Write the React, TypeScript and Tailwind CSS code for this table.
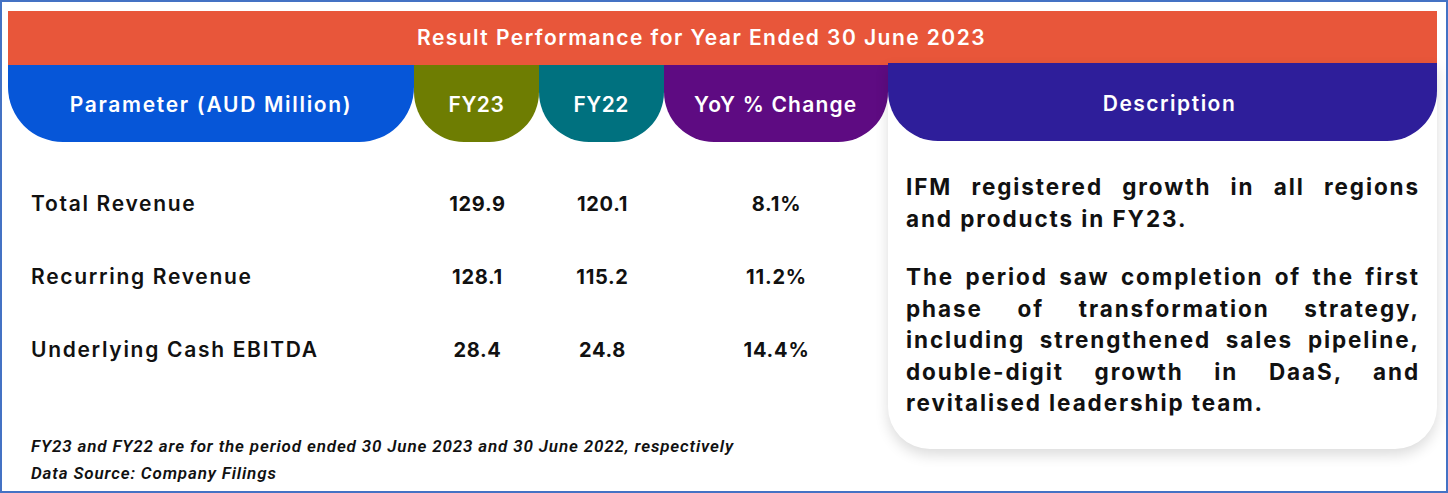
import React from "react";

const rows = [
  { label: "Total Revenue", fy23: "129.9", fy22: "120.1", yoy: "8.1%" },
  { label: "Recurring Revenue", fy23: "128.1", fy22: "115.2", yoy: "11.2%" },
  { label: "Underlying Cash EBITDA", fy23: "28.4", fy22: "24.8", yoy: "14.4%" },
];

const para1 = ["IFM registered growth in all regions", "and products in FY23."];
const para2 = [
  "The period saw completion of the first",
  "phase of transformation strategy,",
  "including strengthened sales pipeline,",
  "double-digit growth in DaaS, and",
  "revitalised leadership team.",
];

function Para({ lines }: { lines: string[] }) {
  return (
    <div>
      {lines.map((l, i) => (
        <div
          key={i}
          className={
            i < lines.length - 1
              ? "text-justify [text-align-last:justify] h-[31.5px] leading-[31.5px] whitespace-nowrap"
              : "text-left h-[31.5px] leading-[31.5px] whitespace-nowrap"
          }
        >
          {l}
        </div>
      ))}
    </div>
  );
}

export default function App() {
  return (
    <div
      className="w-[1448px] h-[493px] border-2 border-[#4472c4] bg-white pl-[6px] pr-[9px] pt-[9px] overflow-hidden"
      style={{ fontFamily: "Inter, 'Noto Sans', sans-serif" }}
    >
      <div className="h-[54px] bg-[#e8563a] flex items-center justify-center text-white text-[21px] font-semibold tracking-[1.45px] pb-[1px] pr-[42px]">
        Result Performance for Year Ended 30 June 2023
      </div>
      <div className="flex">
        <div className="w-[880px] flex flex-col">
          <div className="flex h-[77px] text-white text-[21px] font-semibold">
            <div className="w-[407px] bg-[#0656d8] rounded-b-[55px] flex items-center justify-center tracking-[1.7px] pt-[3px]">
              Parameter (AUD Million)
            </div>
            <div className="w-[125px] bg-[#6e7d02] rounded-b-[50px] flex items-center justify-center tracking-[0.5px] pt-[3px]">
              FY23
            </div>
            <div className="w-[125px] bg-[#00717f] rounded-b-[50px] flex items-center justify-center tracking-[0.5px] pt-[3px]">
              FY22
            </div>
            <div className="w-[225px] bg-[#5e0b82] rounded-b-[50px] flex items-center justify-center tracking-[1.2px] pt-[3px]">
              YoY % Change
            </div>
          </div>
          <div className="pt-[50px] flex flex-col gap-[50px] text-[#111]">
            {rows.map((r) => (
              <div key={r.label} className="flex h-[23px] items-center">
                <div className="w-[407px] pl-[23px] text-[21px] font-semibold tracking-[1.7px]">{r.label}</div>
                <div className="w-[125px] text-center text-[20px] font-bold tracking-[0.7px]">{r.fy23}</div>
                <div className="w-[125px] text-center text-[20px] font-bold tracking-[0.7px]">{r.fy22}</div>
                <div className="w-[223px] text-center text-[20px] font-bold tracking-[0.8px]">{r.yoy}</div>
              </div>
            ))}
          </div>
          <div
            className="mt-[72px] pl-[23px] italic font-semibold text-[17px] tracking-[0.85px] text-[#111] leading-[27px]"
            style={{ fontFamily: "Roboto, 'Liberation Sans', sans-serif" }}
          >
            <div>FY23 and FY22 are for the period ended 30 June 2023 and 30 June 2022, respectively</div>
            <div>Data Source: Company Filings</div>
          </div>
        </div>
        <div className="w-[549px] -mt-[2px] h-[386px] bg-white rounded-b-[42px] shadow-[0_6px_14px_rgba(0,0,0,0.14)] flex flex-col">
          <div className="h-[78px] bg-[#2e1e9a] rounded-b-[50px] flex items-center justify-center text-white text-[21px] font-semibold tracking-[1.5px] pl-[14px] pt-[4px]">
            Description
          </div>
          <div className="pl-[18px] pr-[17px] pt-[30px] text-[22.5px] font-bold tracking-[1.9px] text-[#111] flex flex-col gap-[27px]">
            <Para lines={para1} />
            <Para lines={para2} />
          </div>
        </div>
      </div>
    </div>
  );
}
